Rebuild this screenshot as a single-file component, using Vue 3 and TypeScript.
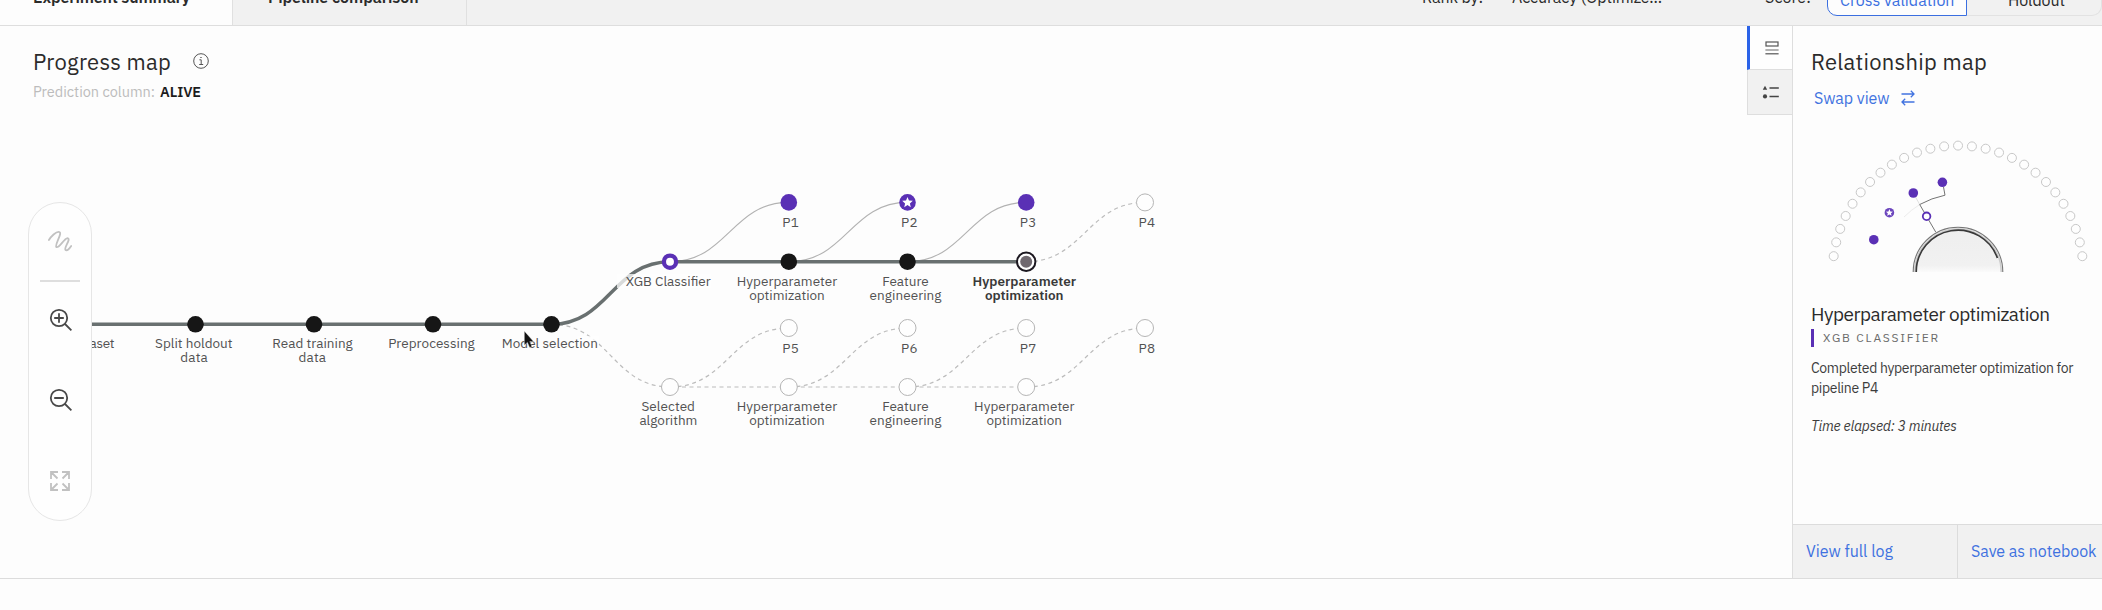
<script setup lang="ts">
import type { Directive } from 'vue'

type Kind = 'done' | 'pipe' | 'best' | 'algo' | 'current' | 'todo'
interface MapNode { x: number; y: number; kind: Kind }
interface Label { t: string; x: number; y: number; w: number; bold?: boolean }

// Tracks a label out (or in) so that it fills the given width.
const vTrack: Directive<HTMLElement, number> = {
  mounted(el, { value }) {
    const n = (el.textContent ?? '').trim().length
    el.style.letterSpacing = (value - el.getBoundingClientRect().width) / n + 'px'
  },
}

const cols = [77, 195.5, 314, 433, 551.5, 670, 788.8, 907.5, 1026.2, 1145]
const yMain = 324.3, yTop = 261.7, yTopP = 202.4, yLow = 387, yLowP = 328

const nodes: MapNode[] = [
  ...[0, 1, 2, 3, 4].map(i => ({ x: cols[i], y: yMain, kind: 'done' as Kind })),
  { x: cols[5], y: yTop, kind: 'algo' },
  { x: cols[6], y: yTop, kind: 'done' },
  { x: cols[7], y: yTop, kind: 'done' },
  { x: cols[8], y: yTop, kind: 'current' },
  { x: cols[6], y: yTopP, kind: 'pipe' },
  { x: cols[7], y: yTopP, kind: 'best' },
  { x: cols[8], y: yTopP, kind: 'pipe' },
  { x: cols[9], y: yTopP, kind: 'todo' },
  ...[5, 6, 7, 8].map(i => ({ x: cols[i], y: yLow, kind: 'todo' as Kind })),
  ...[6, 7, 8, 9].map(i => ({ x: cols[i], y: yLowP, kind: 'todo' as Kind })),
]

const curve = (a: number, ya: number, b: number, yb: number) => {
  const k = (cols[b] - cols[a]) * 0.48
  return `M${cols[a]} ${ya}C${cols[a] + k} ${ya} ${cols[b] - k} ${yb} ${cols[b]} ${yb}`
}
const solid = [5, 6, 7].map(i => curve(i, yTop, i + 1, yTopP))
const dashed = [
  curve(4, yMain, 5, yLow),
  curve(8, yTop, 9, yTopP),
  ...[5, 6, 7, 8].map(i => curve(i, yLow, i + 1, yLowP)),
  ...[5, 6, 7].map(i => `M${cols[i] + 12} ${yLow}H${cols[i + 1] - 9}`),
]

const labels: Label[] = [
  { t: 'Read dataset', x: 76.5, y: 348, w: 76 },
  { t: 'Split holdout', x: 193.8, y: 348, w: 77.5 },
  { t: 'data', x: 194, y: 362.3, w: 27.5 },
  { t: 'Read training', x: 312.5, y: 348, w: 80.5 },
  { t: 'data', x: 312.3, y: 362.3, w: 27.5 },
  { t: 'Preprocessing', x: 431.5, y: 348, w: 86.5 },
  { t: 'Model selection', x: 549.8, y: 348, w: 96 },
  { t: 'XGB Classifier', x: 668.2, y: 286.2, w: 85 },
  { t: 'Hyperparameter', x: 787, y: 286.2, w: 100.5 },
  { t: 'optimization', x: 787, y: 299.5, w: 75.5 },
  { t: 'Feature', x: 905.5, y: 286.2, w: 46.5 },
  { t: 'engineering', x: 905.5, y: 299.5, w: 72 },
  { t: 'Hyperparameter', x: 1024.3, y: 286.2, w: 103.5, bold: true },
  { t: 'optimization', x: 1024.2, y: 299.5, w: 78.5, bold: true },
  { t: 'Selected', x: 668.2, y: 411.3, w: 53.5 },
  { t: 'algorithm', x: 668.4, y: 424.5, w: 58 },
  { t: 'Hyperparameter', x: 787, y: 411.3, w: 100.5 },
  { t: 'optimization', x: 787, y: 424.5, w: 75.5 },
  { t: 'Feature', x: 905.5, y: 411.3, w: 46.5 },
  { t: 'engineering', x: 905.5, y: 424.5, w: 72 },
  { t: 'Hyperparameter', x: 1024.3, y: 411.3, w: 100.5 },
  { t: 'optimization', x: 1024.2, y: 424.5, w: 75.5 },
  ...[0, 1, 2, 3].flatMap(i => [
    { t: `P${i + 1}`, x: cols[6 + i] + 1.8, y: 226.5, w: 16.5 },
    { t: `P${i + 5}`, x: cols[6 + i] + 1.8, y: 352.5, w: 16.5 },
  ]),
]

const star = (cx: number, cy: number, r: number) =>
  Array.from({ length: 10 }, (_, i) => {
    const q = i % 2 ? r * 0.45 : r
    const a = (Math.PI / 5) * i - Math.PI / 2
    return `${(cx + q * Math.cos(a)).toFixed(2)},${(cy + q * Math.sin(a)).toFixed(2)}`
  }).join(' ')

const ring = Array.from({ length: 27 }, (_, i) => {
  const a = ((7.2 + i * 6.37) * Math.PI) / 180
  return { x: 1958 - 125.3 * Math.cos(a), y: 272 - 126.4 * Math.sin(a) }
})
</script>

<template>
  <div class="page">
    <header class="bar">
      <div class="tab active"><span v-track="157">Experiment summary</span></div>
      <div class="tab"><span v-track="150.5">Pipeline comparison</span></div>
      <div class="rank"><span v-track="61">Rank by:</span></div>
      <div class="metric"><span v-track="150">Accuracy (Optimize...</span></div>
      <div class="score"><span v-track="46">Score:</span></div>
      <div class="seg on"><span v-track="114.5">Cross validation</span></div>
      <div class="seg off"><span v-track="57">Holdout</span></div>
    </header>

    <main class="body">
      <section class="progress">
        <svg class="canvas" width="1748" height="552" viewBox="0 26 1748 552">
          <path v-for="d in dashed" :key="d" :d="d" class="dash" />
          <path v-for="d in solid" :key="d" :d="d" class="thin" />
          <path :d="`M${cols[0]} ${yMain}H${cols[4]}`" class="trunk" />
          <path :d="curve(4, yMain, 5, yTop)" class="trunk" />
          <path :d="`M${cols[5]} ${yTop}H${cols[8]}`" class="trunk" />
          <rect x="617" y="274" width="94" height="14" class="mask" />
          <rect x="577" y="336" width="22" height="14" class="mask" />
          <template v-for="(n, i) in nodes" :key="i">
            <circle v-if="n.kind === 'done'" :cx="n.x" :cy="n.y" r="8.3" fill="#161616" />
            <circle v-else-if="n.kind === 'todo'" :cx="n.x" :cy="n.y" r="8.5" class="todo" />
            <circle v-else-if="n.kind === 'algo'" :cx="n.x" :cy="n.y" r="6.1" class="algo" />
            <template v-else-if="n.kind === 'current'">
              <circle :cx="n.x" :cy="n.y" r="9.2" class="cur" />
              <circle :cx="n.x" :cy="n.y" r="6" fill="#6f686f" />
            </template>
            <template v-else>
              <circle :cx="n.x" :cy="n.y" r="8.3" fill="#5a30b5" />
              <polygon v-if="n.kind === 'best'" :points="star(n.x, n.y + 0.2, 5.6)" fill="#fff" />
            </template>
          </template>
          <text
            v-for="(l, i) in labels" :key="i" :x="l.x" :y="l.y" :textLength="l.w"
            :class="{ strong: l.bold }" text-anchor="middle"
          >{{ l.t }}</text>
          <path d="M524.3 331V345.2L527.4 342.4L529.7 347.6L532 346.6L529.8 341.6H533.6Z" class="cursor" />
        </svg>

        <div class="head">
          <h1><span v-track="138">Progress map</span></h1>
          <svg class="info" width="16" height="16" viewBox="0 0 16 16">
            <circle cx="8" cy="8" r="7.3" /><path d="M6.4 6.8H8.2V11.4M6.2 11.5H10.2M7.3 4.5H8.7" />
          </svg>
        </div>
        <p class="sub"><span v-track="122">Prediction column:</span><b v-track="41">ALIVE</b></p>

        <div class="pill">
          <svg class="ic mute" viewBox="0 0 24 24"><path d="M.9 11C3 7.5 8 2.6 10.8 2.8C15.5 3.3 6.3 15.5 8.3 18C11 20 16 9.5 19.5 9.2C23.5 9.8 15.7 18.5 17.4 20.8C19 22.5 21.5 19.5 23.2 17" /></svg>
          <i class="sep" />
          <svg class="ic zin" viewBox="0 0 24 24"><circle cx="11" cy="10" r="8.2" /><path d="M17 16L23.4 22.4M6.2 10H15.8M11 5.2V14.8" /></svg>
          <svg class="ic zout" viewBox="0 0 24 24"><circle cx="11" cy="10" r="8.2" /><path d="M17 16L23.4 22.4M6.2 10H15.8" /></svg>
          <svg class="ic mute fit" viewBox="0 0 24 24"><path d="M3 10V3H10M3 3L9.5 9.5M14 3H21V10M21 3L14.5 9.5M3 14V21H10M3 21L9.5 14.5M21 14V21H14M21 21L14.5 14.5" /></svg>
        </div>
      </section>

      <nav class="side">
        <div class="cell on">
          <svg width="14" height="14" viewBox="0 0 14 14"><rect x="1" y="1" width="12" height="4" fill="none" stroke="#555" stroke-width="1.2" /><path d="M.4 9H13.6" stroke="#888" stroke-width="1.3" /><path d="M.4 12.8H13.6" stroke="#555" stroke-width="1.2" /></svg>
        </div>
        <div class="cell">
          <svg width="18" height="14" viewBox="0 0 18 14"><path d="M3 .8L5.2 4.8H.8Z" fill="#444" /><circle cx="3" cy="11.4" r="2.1" fill="#444" /><path d="M7.5 2.9H16.8M7.5 11.4H16.8" stroke="#444" stroke-width="1.5" /></svg>
        </div>
      </nav>

      <aside class="relation">
        <h1><span v-track="176">Relationship map</span></h1>
        <div class="swap">
          <span v-track="75.5">Swap view</span>
          <svg width="16" height="16" viewBox="0 0 16 16"><path d="M1.5 4H14M10.8 .8L14 4L10.8 7.2M14.5 12H2M5.2 8.8L2 12L5.2 15.2" /></svg>
        </div>
        <svg class="radial" width="309" height="160" viewBox="1793 115 309 160">
          <defs>
            <linearGradient id="hub" x1="0" y1="0" x2="0" y2="1">
              <stop offset="0" stop-color="#eeeeee" /><stop offset=".85" stop-color="#f1f1f1" /><stop offset="1" stop-color="#fbfbfb" />
            </linearGradient>
          </defs>
          <circle v-for="(c, i) in ring" :key="i" :cx="c.x" :cy="c.y" r="4.5" class="slot" />
          <path d="M1913 272A45 45 0 0 1 2003 272Z" fill="url(#hub)" />
          <path d="M1913.2 272A44.8 44.8 0 0 1 2002.8 272" fill="none" stroke="#777" stroke-width="1.1" />
          <path d="M1914.8 272A43.2 43.2 0 0 1 2001.2 272" fill="none" stroke="#ccc" stroke-width="1.5" />
          <path d="M1916.2 272A41.8 41.8 0 0 1 1997.4 258" fill="none" stroke="#393939" stroke-width="1.7" />
          <path d="M1904 217Q1911 210 1919.7 204.5" fill="none" stroke="#ececec" stroke-width="1" />
          <path d="M1913.3 193L1919.7 204.5" stroke="#e0e0e0" stroke-width="1" />
          <path d="M1935.7 232L1919.7 204.5Q1931.5 198 1945 195.2L1943.5 187" fill="none" stroke="#747474" stroke-width="1" />
          <circle cx="1873.8" cy="239.7" r="4.8" fill="#5a30b5" />
          <circle cx="1913.3" cy="193" r="4.8" fill="#5a30b5" />
          <circle cx="1942.4" cy="182.3" r="4.8" fill="#5a30b5" />
          <circle cx="1889.4" cy="212.7" r="4.8" fill="#6b45bd" />
          <polygon :points="star(1889.4, 212.8, 3.7)" fill="#fff" />
          <circle cx="1926.6" cy="216.3" r="3.8" fill="#fff" stroke="#5a30b5" stroke-width="1.8" />
        </svg>
        <h2><span v-track="238.5">Hyperparameter optimization</span></h2>
        <div class="algoname"><span v-track="117">XGB CLASSIFIER</span></div>
        <p class="msg"><span v-track="262">Completed hyperparameter optimization for</span><br><span v-track="67">pipeline P4</span></p>
        <p class="time"><span v-track="145.5">Time elapsed: 3 minutes</span></p>
        <footer>
          <a class="log"><span v-track="87">View full log</span></a>
          <a class="note"><span v-track="125.5">Save as notebook</span></a>
        </footer>
      </aside>
    </main>
  </div>
</template>

<style>
body { background: #fdfdfd; }
</style>

<style scoped>
.page { width: 2102px; height: 610px; overflow: hidden; background: #fdfdfd; color: #2b2b2b; font-family: "IBM Plex Sans", Roboto, "Liberation Sans", sans-serif; box-sizing: border-box; }
.page * { box-sizing: border-box; }
h1, h2, p { margin: 0; font-weight: 400; }
span, b { white-space: nowrap; display: inline-block; }
.bar { display: flex; height: 65px; margin-top: -39px; background: #f1f1f1; border-bottom: 1px solid #dedede; font-size: 16px; line-height: 73px; }
.tab { width: 234px; height: 64px; padding-left: 35px; border-right: 1px solid #e0e0e0; font-weight: 600; }
.tab.active { width: 233px; padding-left: 33px; background: #fdfdfd; }
.rank { margin-left: 955px; width: 90px; }
.metric { width: 253px; }
.score { width: 62px; }
.seg { height: 55px; line-height: 77px; }
.seg.on { width: 140px; padding-left: 12px; color: #3b6fe0; background: #fdfdfd; border: 1px solid #3b6fe0; border-radius: 10px 0 0 10px; }
.seg.off { width: 135px; padding-left: 41px; border: 1px solid #e2e2e2; border-left: 0; border-radius: 0 10px 10px 0; }
.body { display: flex; height: 553px; border-bottom: 1px solid #dcdcdc; }
.progress { position: relative; width: 1747px; }
.canvas { position: absolute; left: 0; top: 0; font-size: 13.5px; }
.canvas text { fill: #525252; }
.canvas text.strong { font-weight: 600; fill: #393939; }
.dash { fill: none; stroke: #bcbcbc; stroke-width: 1.2; stroke-dasharray: 4 3.5; }
.thin { fill: none; stroke: #b2b2b2; stroke-width: 1.1; }
.trunk { fill: none; stroke: #697070; stroke-width: 3.4; }
.mask { fill: #fdfdfd; opacity: .75; }
.todo { fill: #fefefe; stroke: #b5b5b5; stroke-width: 1; }
.algo { fill: #fff; stroke: #5a30b5; stroke-width: 4.3; }
.cur { fill: #fff; stroke: #1c1820; stroke-width: 2; }
.cursor { fill: #111; stroke: #fff; stroke-width: .4; }
.slot { fill: #fefefe; stroke: #c8c8c8; stroke-width: 1; }
.head { position: relative; display: flex; align-items: flex-start; padding: 19px 0 0 33px; }
h1 { font-size: 22px; line-height: 34px; height: 34px; }
.head h1 { width: 160px; }
.info { margin-top: 8px; margin-left: -.5px; fill: none; stroke: #555; stroke-width: 1; }
.sub { position: relative; margin-top: 1px; padding-left: 33px; font-size: 14.5px; line-height: 24px; color: #bcbcbc; }
.sub b { margin-left: 5px; font-weight: 600; color: #1c1c1c; }
.pill { position: absolute; left: 28px; top: 176px; width: 64px; height: 319px; display: flex; flex-direction: column; align-items: center; padding-top: 26px; background: #fefefe; border: 1px solid #e6e6e6; border-radius: 32px; }
.ic { width: 24px; height: 24px; flex: none; fill: none; stroke: #484848; stroke-width: 1.8; }
.ic.mute { stroke: #c1c1c1; stroke-linecap: round; }
.ic.fit { margin-top: 57px; stroke-linecap: butt; }
.sep { width: 40px; height: 2px; margin: 27px 0 26px; background: #dedede; }
.zout { margin-top: 56px; }
.side { width: 45px; }
.cell { height: 45px; padding-left: 14px; padding-top: 15px; background: #f1f1f1; border: 1px solid #dedede; border-width: 0 0 1px 1px; }
.cell.on { height: 44px; padding-left: 15px; background: #fefefe; border-left: 3px solid #2b63e8; }
.cell svg { display: block; }
.relation { width: 310px; display: flex; flex-direction: column; border-left: 1px solid #dedede; }
.relation h1 { margin-top: 19px; padding-left: 18px; }
.swap { display: flex; align-items: center; gap: 10px; height: 28px; margin-top: 5px; padding-left: 21px; font-size: 16px; line-height: 28px; color: #4173e0; }
.swap svg { fill: none; stroke: #4173e0; stroke-width: 1.3; }
.radial { display: block; margin-top: 3px; }
h2 { margin-top: 25px; padding-left: 18px; font-size: 19px; line-height: 28px; height: 28px; }
.algoname { height: 18px; margin-top: 1px; margin-left: 18px; padding-left: 9px; border-left: 3.5px solid #5a30b5; font-size: 12px; line-height: 17px; color: #6b6b6b; }
.msg { margin-top: 12px; padding-left: 18px; font-size: 14px; line-height: 19.5px; color: #3d3d3d; }
.time { margin-top: 19px; padding-left: 18px; font-size: 14px; line-height: 19px; font-style: italic; color: #3d3d3d; }
footer { display: flex; height: 54px; margin-top: auto; background: #f1f1f1; border-top: 1px solid #dcdcdc; font-size: 16px; line-height: 52px; color: #3f72e0; }
.log { width: 165px; padding-left: 13px; border-right: 1px solid #dcdcdc; }
.note { padding-left: 13px; }
</style>
